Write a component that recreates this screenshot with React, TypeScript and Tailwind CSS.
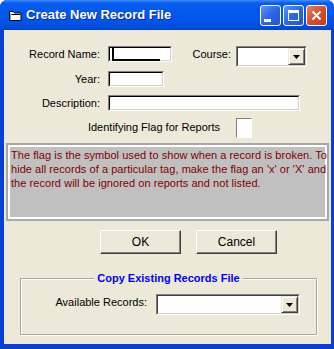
import { ReactNode } from "react";

const font = { fontFamily: '"Liberation Sans", Arial, sans-serif' };

const Sunken = ({ className, children }: { className: string; children?: ReactNode }) => (
  <div className={`border border-t-[#808080] border-l-[#808080] border-r-white border-b-white ${className}`}>
    <div className="relative h-full w-full border border-t-[#000] border-l-[#000] border-r-[#d4d0c8] border-b-[#d4d0c8] bg-white">
      {children}
    </div>
  </div>
);

const DropArrow = () => (
  <div className="flex h-full w-[17px] items-center justify-center border border-t-[#ece9d8] border-l-[#ece9d8] border-r-[#404040] border-b-[#404040] bg-[#ece9d8] shadow-[inset_1px_1px_0_#fff,inset_-1px_-1px_0_#808080]">
    <svg width="7" height="4" viewBox="0 0 7 4">
      <path d="M0 0h7L3.5 4z" fill="#000" />
    </svg>
  </div>
);

const Combo = ({ className }: { className: string }) => (
  <div className={`border border-t-[#808080] border-l-[#808080] border-r-white border-b-white ${className}`}>
    <div className="flex h-full w-full justify-end border border-t-[#404040] border-l-[#404040] border-r-[#d4d0c8] border-b-[#d4d0c8] bg-white">
      <DropArrow />
    </div>
  </div>
);

const Button = ({ label }: { label: string }) => (
  <div className="flex h-[24px] w-[81px] items-center justify-center border border-t-white border-l-white border-r-[#404040] border-b-[#404040] bg-[#ece9d8] text-[12px] text-black shadow-[inset_-1px_-1px_0_#808080]">
    {label}
  </div>
);

const TitleBtn = ({ red, children }: { red?: boolean; children: ReactNode }) => (
  <div
    className={`flex h-[21px] w-[21px] items-center justify-center rounded-[3px] border border-white ${
      red
        ? "bg-[linear-gradient(135deg,#e8815f_0%,#d6502c_50%,#c23c1a_100%)]"
        : "bg-[linear-gradient(135deg,#5b96f8_0%,#2b66ea_50%,#1e55d6_100%)]"
    }`}
  >
    {children}
  </div>
);

export default function App() {
  return (
    <div style={font} className="h-[349px] w-[334px] overflow-hidden rounded-t-[7px] bg-[#0a3fd6]">
      {/* title bar */}
      <div className="flex h-[30px] items-center bg-[linear-gradient(to_bottom,#3d8ef8_0%,#0a5cf0_10%,#0058ee_45%,#0052e6_80%,#0043d0_100%)] pl-[9px] pr-[7px]">
        <svg width="13" height="11" viewBox="0 0 13 11" className="mt-[1px]">
          <path d="M0.5 1.5h4l1 1.5h6.5v7.5h-11.5z" fill="#fff" stroke="#000" />
          <path d="M2.5 4.5h9" stroke="#000" />
          <path d="M1.5 3.5v6" stroke="#9a9a9a" />
        </svg>
        <span className="ml-[4px] text-[13px] font-bold text-white [text-shadow:1px_1px_0_#0a2a9c]">
          Create New Record File
        </span>
        <div className="ml-auto flex gap-[2px]">
          <TitleBtn>
            <div className="mt-[10px] mr-[6px] h-[3px] w-[7px] bg-white" />
          </TitleBtn>
          <TitleBtn>
            <div className="h-[11px] w-[11px] border border-t-[3px] border-white" />
          </TitleBtn>
          <TitleBtn red>
            <svg width="11" height="11" viewBox="0 0 11 11">
              <path d="M1.5 1.5l8 8M9.5 1.5l-8 8" stroke="#fff" strokeWidth="2" />
            </svg>
          </TitleBtn>
        </div>
      </div>

      {/* client area */}
      <div className="mx-[4px] flex h-[314px] w-[327px] flex-col bg-[#ece9d8] pt-[16px] text-[11px] text-black">
        <div className="flex items-start">
          <div className="w-[96px] text-right leading-[16px]">Record Name:</div>
          <Sunken className="ml-[8px] h-[16px] w-[64px]">
            <div className="absolute left-[2px] top-[0px] h-[13px] w-[2px] bg-black" />
            <div className="absolute left-[2px] top-[11px] h-[2px] w-[48px] bg-black" />
          </Sunken>
          <div className="w-[59px] text-right leading-[16px]">Course:</div>
          <Combo className="ml-[5px] h-[21px] w-[71px]" />
        </div>

        <div className="mt-[4px] flex items-start">
          <div className="w-[96px] text-right leading-[16px]">Year:</div>
          <Sunken className="ml-[8px] h-[16px] w-[56px]" />
        </div>

        <div className="mt-[8px] flex items-start">
          <div className="w-[96px] text-right leading-[16px]">Description:</div>
          <Sunken className="ml-[8px] h-[16px] w-[192px]" />
        </div>

        <div className="mt-[7px] flex items-start">
          <div className="mt-[1px] w-[216px] text-right leading-[16px]">Identifying Flag for Reports</div>
          <div className="ml-[16px] h-[20px] w-[16px] border border-t-[#808080] border-l-[#808080] border-r-white border-b-white bg-white" />
        </div>

        <div className="mx-[2px] mt-[5px] h-[78px] w-[323px] border-2 border-[#a8a8a8]">
          <div className="h-full w-full whitespace-nowrap border-2 border-white bg-[#c0c0c0] pl-[1px] pt-[1px] text-[11px] leading-[14px] tracking-[0.05px] text-[#800000]">
            The flag is the symbol used to show when a record is broken. To
            <br />
            hide all records of a particular tag, make the flag an 'x' or 'X' and
            <br />
            the record will be ignored on reports and not listed.
          </div>
        </div>

        <div className="mt-[9px] flex gap-[15px] pl-[96px]">
          <Button label="OK" />
          <Button label="Cancel" />
        </div>

        <div className="relative ml-[16px] mt-[24px] h-[57px] w-[297px] border border-[#aca899] shadow-[1px_1px_0_#fff,inset_1px_1px_0_#fff]">
          <div className="absolute -top-[8px] left-0 right-0 flex justify-center">
            <span className="bg-[#ece9d8] px-[3px] text-[11px] font-bold leading-[14px] text-[#0000ff]">
              Copy Existing Records File
            </span>
          </div>
          <div className="flex items-start pt-[15px]">
            <div className="mt-[1px] w-[126px] text-right leading-[14px]">Available Records:</div>
            <Combo className="ml-[9px] h-[21px] w-[144px]" />
          </div>
        </div>
      </div>
    </div>
  );
}
